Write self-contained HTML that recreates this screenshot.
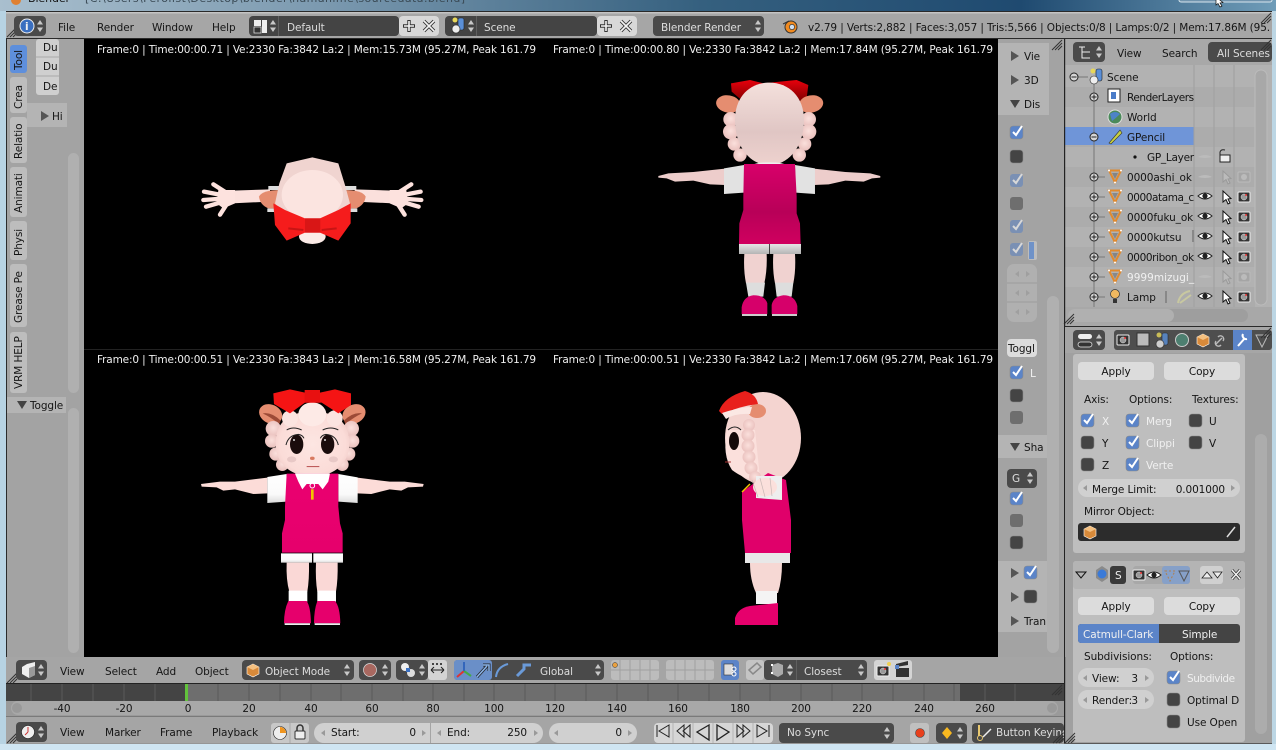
<!DOCTYPE html>
<html><head><meta charset="utf-8"><title>Blender</title>
<style>
html,body{margin:0;padding:0;width:1276px;height:750px;overflow:hidden;background:#cfe5f2}
svg{display:block}
text{font-family:"DejaVu Sans","Liberation Sans",sans-serif;font-size:10.5px;letter-spacing:-.1px;fill:#151515;white-space:pre}
.w{fill:#f0f0f0}.g{fill:#ddd}.m{fill:#666}
</style></head><body>
<svg width="1276" height="750" viewBox="0 0 1276 750" xmlns="http://www.w3.org/2000/svg">
<defs>
<linearGradient id="sky" x1="0" x2="1" y1="0" y2="0"><stop offset="0" stop-color="#a9bfce"/><stop offset=".25" stop-color="#7c9ab0"/><stop offset=".55" stop-color="#35607f"/><stop offset=".8" stop-color="#1f4a70"/><stop offset="1" stop-color="#6f9cb8"/></linearGradient>
<radialGradient id="skin" cx=".5" cy=".5" r=".6"><stop offset="0" stop-color="#fde6e2"/><stop offset=".75" stop-color="#fbdcd8"/><stop offset="1" stop-color="#eec8c4"/></radialGradient>
<radialGradient id="curl" cx=".5" cy=".45" r=".6"><stop offset="0" stop-color="#fbe0dc"/><stop offset="1" stop-color="#e8bebb"/></radialGradient>
<linearGradient id="skinb" x1="0" x2="0" y1="0" y2="1"><stop offset="0" stop-color="#f4e0dc"/><stop offset=".6" stop-color="#e0c6c4"/><stop offset="1" stop-color="#eed2ce"/></linearGradient>
<linearGradient id="pink" x1="0" x2="0" y1="0" y2="1"><stop offset="0" stop-color="#ea0070"/><stop offset="1" stop-color="#e6006c"/></linearGradient>
<linearGradient id="pinkb" x1="0" x2="0" y1="0" y2="1"><stop offset="0" stop-color="#d8006a"/><stop offset=".6" stop-color="#b80058"/><stop offset="1" stop-color="#d0005f"/></linearGradient>
<linearGradient id="wht" x1="0" x2="0" y1="0" y2="1"><stop offset="0" stop-color="#fff"/><stop offset=".7" stop-color="#fafafa"/><stop offset="1" stop-color="#dcdcdc"/></linearGradient>
<linearGradient id="wb" x1="0" x2="0" y1="0" y2="1"><stop offset="0" stop-color="#e6e6e6"/><stop offset="1" stop-color="#b5b5b5"/></linearGradient>
<linearGradient id="bowb" x1="0" x2="0" y1="0" y2="1"><stop offset="0" stop-color="#e8000c"/><stop offset="1" stop-color="#7c0000"/></linearGradient>
<g id="ud"><path d="M-3-1.500L0-6 3-1.500ZM-3 1.500L0 6 3 1.500Z" fill="#c8c8c8"/></g>
<g id="c1"><rect width="13" height="13" rx="3" fill="#5b84c8" stroke="#8a8a8a" stroke-width=".6"/><path d="M3 6l3 3 6-9" stroke="#fff" stroke-width="2" fill="none"/></g>
<g id="c1d"><rect width="13" height="13" rx="3" fill="#7a90b4"/><path d="M3 6l3 3 6-9" stroke="#d8d8d8" stroke-width="2" fill="none"/></g>
<g id="c0"><rect width="13" height="13" rx="3" fill="#444" stroke="#8a8a8a" stroke-width=".6"/></g>
<g id="c0d"><rect width="13" height="13" rx="3" fill="#6e6e6e"/></g>
<g id="eye"><path d="M-7 0Q0-6 7 0Q0 6-7 0Z" fill="#fff" stroke="#222"/><circle r="2.600" fill="#222"/></g>
<g id="eyeo"><path d="M-7 0Q0-4 7 0Q0 2-7 0Z" fill="#bbb"/></g>
<g id="cur"><path d="M-3-6V5L0 2.500 2 7 4 6 2 2 5 1.500Z" fill="#fff" stroke="#111"/></g>
<g id="curo"><path d="M-3-6V5L0 2.500 2 7 4 6 2 2 5 1.500Z" fill="#bbb" stroke="#999"/></g>
<g id="cam"><rect x="-6" y="-5" width="12" height="10" rx="1" fill="#333" stroke="#eee"/><circle r="3" fill="#999" stroke="#ddd" stroke-width=".5"/><circle cx="2" cy="-2" r="1" fill="#e33"/></g>
<g id="camo"><rect x="-6" y="-5" width="12" height="10" rx="1" fill="#a5a5a5" stroke="#bbb"/><circle r="3" fill="#bbb"/></g>
<g id="tri"><path d="M-6-5.500H6L0 6.500Z" fill="none" stroke="#e08a2e" stroke-width="2"/><path d="M-3-3H3L0 3Z" fill="#555" opacity=".45"/><circle cx="-6" cy="-5.500" r="1" fill="#fff"/><circle cx="6" cy="-5.500" r="1" fill="#fff"/><circle cy="6.500" r="1" fill="#fff"/></g>
<g id="plus"><circle r="4" fill="#d5d5d5" stroke="#222"/><path d="M-2.500 0H2.500M0-2.500V2.500" stroke="#222"/></g>
<g id="minus"><circle r="4" fill="#d5d5d5" stroke="#222"/><path d="M-2.500 0H2.500" stroke="#222"/></g>
<g id="scn"><circle cx="-4" cy="-6" r="2.500" fill="#e8d85a"/><rect x="-1" y="-8" width="6" height="12" rx="2" fill="#5a8fd8" stroke="#222" stroke-width=".6"/><circle cx="-3" cy="3" r="4" fill="#eee" stroke="#222" stroke-width=".6"/></g>
<g id="box"><path d="M0-6L6-3V4L0 7-6 4V-3Z" fill="#d88a3a" stroke="#fff" stroke-width=".6"/><path d="M-6-3L0 0 6-3 0-6Z" fill="#f4c080"/></g>
<g id="hatch"><path d="M0 10L10 0M3 10L10 3M6 10L10 6" stroke="#333" stroke-width="1"/></g>
<g id="la"><path d="M2-3V3L-2 0Z" fill="#999"/></g>
<g id="ra"><path d="M-2-3V3L2 0Z" fill="#999"/></g>
<g id="rt"><path d="M-4-5V5L4 0Z" fill="#555"/></g>
<g id="dt"><path d="M-5-4H5L0 4Z" fill="#444"/></g>
</defs>

<!-- desktop / frame -->
<rect width="1276" height="750" fill="#cfe5f2"/>
<rect width="1276" height="11" fill="url(#sky)"/>
<circle cx="16" cy="0" r="5" fill="#e08030"/>
<text x="28" y="2" style="font-size:11px">Blender</text>
<text x="85" y="2" style="font-size:11px;fill:#3a4a55" textLength="380">[C:\Users\Ferolist\Desktop\blender\hamahime\sourcedata.blend]</text>
<rect x="1179" y="-3" width="93" height="5" rx="2" fill="#6f93ad" stroke="#d8e6ee"/>
<path d="M1216-3V5L1218 3.500 1220 7 1222 6 1220 3 1223 2.500Z" fill="#fff" stroke="#111" stroke-width=".7"/>
<rect x="0" y="11" width="6" height="733" fill="#b7d3e3"/>
<rect x="1272" y="11" width="4" height="733" fill="#bcd6e4"/>
<rect x="6" y="11" width="1266" height="733" fill="#2a2a2a"/>

<!-- top bar -->
<rect x="6" y="12" width="1266" height="26" fill="#a6a6a6"/>
<rect x="6" y="12" width="1266" height="1.500" fill="#c4c4c4"/>
<use href="#hatch" x="7" y="27"/>
<rect x="14" y="16" width="32" height="20" rx="4" fill="#4a4a4a"/>
<circle cx="27" cy="26" r="7" fill="#3a6fc0" stroke="#eee"/><text x="25" y="30" class="w" style="font-weight:bold">i</text>
<use href="#ud" x="40" y="26"/>
<text x="58" y="31">File</text><text x="97" y="31">Render</text><text x="152" y="31">Window</text><text x="212" y="31">Help</text>
<rect x="249" y="16" width="150" height="20" rx="4" fill="#444"/>
<rect x="254" y="20" width="7" height="6" fill="#eee"/><rect x="254" y="27" width="7" height="6" fill="#333" stroke="#eee" stroke-width=".7"/><rect x="262" y="20" width="5" height="13" fill="#eee"/>
<use href="#ud" x="273" y="26"/><rect x="278" y="16" width=".8" height="20" fill="#666"/>
<text x="287" y="31" class="g">Default</text>
<rect x="399" y="16" width="40" height="20" rx="4" fill="#d8d8d8"/>
<path d="M403 26H415M409 20V32" stroke="#333" stroke-width="3.400"/><path d="M404 26H414M409 21V31" stroke="#f4f4f4" stroke-width="1.600"/>
<path d="M424 21L434 31M434 21L424 31" stroke="#333" stroke-width="3.400"/><path d="M424 21L434 31M434 21L424 31" stroke="#f4f4f4" stroke-width="1.600"/>
<rect x="445" y="16" width="152" height="20" rx="4" fill="#444"/>
<use href="#scn" x="459" y="26"/><use href="#ud" x="471" y="26" /><rect x="476" y="16" width=".8" height="20" fill="#666"/>
<text x="484" y="31" class="g">Scene</text>
<rect x="597" y="16" width="40" height="20" rx="4" fill="#d8d8d8"/>
<path d="M600 26H612M606 20V32" stroke="#333" stroke-width="3.400"/><path d="M601 26H611M606 21V31" stroke="#f4f4f4" stroke-width="1.600"/>
<path d="M621 21L631 31M631 21L621 31" stroke="#333" stroke-width="3.400"/><path d="M621 21L631 31M631 21L621 31" stroke="#f4f4f4" stroke-width="1.600"/>
<rect x="653" y="16" width="111" height="20" rx="4" fill="#4a4a4a"/>
<text x="661" y="31" class="g">Blender Render</text><use href="#ud" x="758" y="26"/>
<circle cx="791" cy="27" r="6" fill="#f08a20" stroke="#333"/><circle cx="792" cy="27" r="2.600" fill="#cfe0f2" stroke="#333" stroke-width=".7"/><path d="M783 24L789 21" stroke="#333"/>
<text x="808" y="31" textLength="462">v2.79 | Verts:2,882 | Faces:3,057 | Tris:5,566 | Objects:0/8 | Lamps:0/2 | Mem:17.86M (95.</text>
<use href="#hatch" x="1261" y="13"/>

<!-- left toolbar -->
<rect x="7" y="39" width="77" height="618" fill="#a3a3a3"/>
<rect x="36" y="39" width="23" height="56" rx="3" fill="#cfcfcf"/>
<path d="M36 57H59M36 76H59" stroke="#aaa"/>
<text x="43" y="51">Du</text><text x="43" y="70">Du</text><text x="43" y="90">De</text>
<rect x="27" y="103" width="40" height="24" fill="#b4b4b4"/>
<use href="#rt" x="45" y="116"/><text x="52" y="120">Hi</text>
<g>
<rect x="10" y="45" width="17" height="28" rx="3" fill="#5e8fdc"/>
<rect x="10" y="77" width="17" height="36" rx="3" fill="#bdbdbd"/>
<rect x="10" y="117" width="17" height="46" rx="3" fill="#bdbdbd"/>
<rect x="10" y="167" width="17" height="50" rx="3" fill="#bdbdbd"/>
<rect x="10" y="221" width="17" height="39" rx="3" fill="#bdbdbd"/>
<rect x="10" y="264" width="17" height="63" rx="3" fill="#bdbdbd"/>
<rect x="10" y="332" width="17" height="61" rx="3" fill="#bdbdbd"/>
<text transform="translate(22 70) rotate(-90)">Tool</text>
<text transform="translate(22 109) rotate(-90)">Crea</text>
<text transform="translate(22 159) rotate(-90)">Relatio</text>
<text transform="translate(22 213) rotate(-90)">Animati</text>
<text transform="translate(22 256) rotate(-90)">Physi</text>
<text transform="translate(22 323) rotate(-90)">Grease Pe</text>
<text transform="translate(22 389) rotate(-90)">VRM HELP</text>
</g>
<rect x="68" y="153" width="11" height="240" rx="5.500" fill="#b0b0b0"/>
<rect x="7" y="397" width="59" height="16" fill="#b4b4b4"/>
<use href="#dt" x="22" y="405"/><text x="30" y="409">Toggle</text>
<rect x="68" y="408" width="11" height="245" rx="5.500" fill="#b0b0b0"/>

<!-- 3D viewport -->
<rect x="84" y="39" width="914" height="618" fill="#000"/>
<rect x="84" y="349" width="914" height="1" fill="#222"/>
<text x="97" y="53" class="w" textLength="439">Frame:0 | Time:00:00.71 | Ve:2330 Fa:3842 La:2 | Mem:15.73M (95.27M, Peak 161.79</text>
<text x="553" y="53" class="w" textLength="440">Frame:0 | Time:00:00.80 | Ve:2330 Fa:3842 La:2 | Mem:17.84M (95.27M, Peak 161.79</text>
<text x="97" y="363" class="w" textLength="439">Frame:0 | Time:00:00.51 | Ve:2330 Fa:3843 La:2 | Mem:16.58M (95.27M, Peak 161.79</text>
<text x="553" y="363" class="w" textLength="440">Frame:0 | Time:00:00.51 | Ve:2330 Fa:3842 La:2 | Mem:17.06M (95.27M, Peak 161.79</text>

<!-- top view -->
<g transform="translate(190 140) scale(.3333)">
<path d="M235 138H275V150H235ZM459 138H499V150H459ZM232 205H255V216H232ZM479 205H502V216H479Z" fill="#ddd"/>
<path d="M125 152L240 148V185L125 190Z" fill="#fbe0dc"/><path d="M609 152L494 148V185L609 190Z" fill="#fbe0dc"/>
<g stroke="#fde2de" stroke-width="13" stroke-linecap="round" fill="none">
<path d="M110 168L42 155M110 175L40 180M110 182L48 200M112 190L90 224M112 160L70 133"/>
<path d="M624 168L692 155M624 175L694 180M624 182L686 200M622 190L644 224M622 160L664 133"/>
</g>
<path d="M85 150L135 150V190L100 205 80 190Z" fill="#fde2de"/><path d="M649 150L599 150V190L634 205 654 190Z" fill="#fde2de"/>
<path d="M207 170Q215 150 275 150V205H235Q210 195 207 170Z" fill="#e58d70"/>
<path d="M527 170Q519 150 459 150V205H499Q524 195 527 170Z" fill="#e58d70"/>
<ellipse cx="367" cy="290" rx="40" ry="22" fill="#fbeae6"/>
<path d="M290 70L367 52 445 70 465 135 480 190 450 225H285L255 190 268 130Z" fill="#f0d4d0"/>
<ellipse cx="367" cy="165" rx="92" ry="75" fill="#fbe4e0"/>
<path d="M250 190L285 210 345 235H390L445 210 482 190V250L445 302 390 278H345L290 302 255 255Z" fill="#f51c1c"/>
<rect x="345" y="235" width="46" height="43" fill="#d91616"/>
<path d="M295 265L340 270M395 270L440 265" stroke="#c81414" stroke-width="6"/>
</g>

<!-- back view -->
<g transform="translate(650 70) scale(.3333)">
<path d="M243 40L300 30 340 40 390 35 440 30 475 45 470 85 440 95H280L245 65Z" fill="url(#bowb)"/>
<ellipse cx="235" cy="102" rx="37" ry="26" transform="rotate(10 235 102)" fill="#e58d70"/>
<ellipse cx="483" cy="102" rx="37" ry="26" transform="rotate(-10 483 102)" fill="#e58d70"/>
<g fill="url(#curl)"><circle cx="242" cy="148" r="22"/><circle cx="242" cy="185" r="23"/><circle cx="253" cy="222" r="20"/><circle cx="270" cy="255" r="20"/><circle cx="476" cy="148" r="22"/><circle cx="476" cy="185" r="23"/><circle cx="464" cy="222" r="20"/><circle cx="448" cy="255" r="20"/></g>
<path d="M255 150C255 80 300 38 358 38C416 38 462 80 462 150C462 225 420 285 358 285C296 285 255 225 255 150Z" fill="url(#skinb)"/>
<ellipse cx="358" cy="286" rx="50" ry="9" fill="#eee"/>
<path d="M25 318L55 310 130 306 225 296V345L180 343 130 332 75 335 50 325 25 323Z" fill="#edcdcb"/>
<path d="M691 318L661 310 586 306 491 296V345L536 343 586 332 641 335 666 325 691 323Z" fill="#edcdcb"/>
<path d="M222 295L282 285V368L222 372Z" fill="#e2e2e2"/><path d="M435 285L495 295V372L437 368Z" fill="#e2e2e2"/>
<path d="M282 282H435L440 380V430L450 460 452 522H267L268 460 280 420V380Z" fill="url(#pinkb)"/>
<path d="M267 522H358V552H267ZM360 522H453V552H360Z" fill="url(#wb)"/>
<path d="M283 552H350Q352 600 343 640H288Q280 600 283 552ZM370 552H435Q438 600 430 640H375Q367 600 370 552Z" fill="#f0d2d0"/>
<path d="M288 638H345L340 680H295ZM375 638H430L425 680H380Z" fill="#ddd"/>
<path d="M275 732V712Q280 680 310 676 345 676 352 700V732ZM365 732V705Q370 680 400 676 435 676 442 708V732Z" fill="#d6006a"/>
<path d="M276 732H351V738H276ZM366 732H441V738H366Z" fill="#ccc"/>
</g>

<!-- front view -->
<g transform="translate(190 380) scale(.3333)">
<ellipse cx="242" cy="102" rx="36" ry="28" transform="rotate(25 242 102)" fill="#e58d70"/>
<ellipse cx="492" cy="102" rx="36" ry="28" transform="rotate(-25 492 102)" fill="#e58d70"/>
<path d="M218 100Q245 95 272 122L268 132Q240 110 218 100ZM516 100Q489 95 462 122L466 132Q494 110 516 100Z" fill="#9c4a36"/>
<g fill="url(#curl)"><circle cx="250" cy="146" r="23"/><circle cx="245" cy="183" r="20"/><circle cx="258" cy="222" r="20"/><circle cx="277" cy="254" r="19"/><circle cx="484" cy="146" r="23"/><circle cx="488" cy="183" r="20"/><circle cx="476" cy="222" r="20"/><circle cx="457" cy="254" r="19"/></g>
<path d="M257 190C257 110 320 95 367 95C414 95 478 110 478 190C478 260 420 290 367 290C314 290 257 260 257 190Z" fill="url(#skin)"/>
<ellipse cx="300" cy="115" rx="24" ry="24" fill="#fbe4e0"/><ellipse cx="434" cy="115" rx="24" ry="24" fill="#fbe4e0"/>
<ellipse cx="367" cy="103" rx="42" ry="36" fill="#fdeae6"/>
<path d="M250 40L300 28 345 38H390L435 28 483 40V75L445 100 395 68H345L300 100 252 72Z" fill="#f51414"/>
<rect x="344" y="30" width="46" height="38" fill="#e81010"/>
<ellipse cx="320" cy="193" rx="20" ry="29" fill="#1a0c0c"/><ellipse cx="413" cy="193" rx="20" ry="29" fill="#1a0c0c"/>
<circle cx="312" cy="180" r="3" fill="#ddd"/><circle cx="405" cy="180" r="3" fill="#ddd"/>
<path d="M288 195Q295 165 325 163 338 165 342 175M445 195Q438 165 408 163 395 165 391 175M290 150Q310 138 335 150M398 150Q423 138 445 150" fill="none" stroke="#222" stroke-width="3"/>
<ellipse cx="305" cy="238" rx="14" ry="9" fill="#e8c8c6"/><ellipse cx="430" cy="238" rx="14" ry="9" fill="#e8c8c6"/>
<ellipse cx="367" cy="235" rx="7" ry="5" fill="#d87a60"/>
<path d="M350 260H388" stroke="#a33" stroke-width="2.500"/>
<path d="M33 312L90 305 135 305 232 293V340L190 342 135 328 100 332 80 322 35 320Z" fill="#fcdcd8"/>
<path d="M701 312L644 305 599 305 502 293V340L544 342 599 328 634 332 654 322 699 320Z" fill="#fcdcd8"/>
<path d="M232 291L290 282V365L232 369Z" fill="url(#wht)"/><path d="M445 282L503 292V369L445 365Z" fill="url(#wht)"/>
<path d="M290 281H445V380L450 430 458 460V518H276V460L285 420V380Z" fill="url(#pink)"/>
<path d="M315 281H420L415 305 398 328 385 312H350L337 328 325 305Z" fill="#fff"/>
<circle cx="367" cy="317" r="7" fill="#e8006e" stroke="#fff" stroke-width="3"/>
<rect x="363" y="328" width="8" height="31" fill="#f2c400"/>
<path d="M273 520H366V548H273ZM370 520H459V548H370Z" fill="url(#wht)"/>
<path d="M290 548H357Q358 600 352 635H298Q288 600 290 548ZM378 548H443Q444 600 438 635H382Q376 600 378 548Z" fill="#fad8d6"/>
<path d="M296 632H352V665H296ZM382 632H438V665H382Z" fill="#fff"/>
<path d="M295 663H350Q362 680 363 730H282Q282 690 295 663ZM382 663H435Q450 680 451 730H372Q372 690 382 663Z" fill="#e6006c"/>
<path d="M284 730H360V735H284ZM374 730H450V735H374Z" fill="#eee"/>
</g>

<!-- side view -->
<g>
<ellipse cx="763" cy="438" rx="38" ry="46" fill="#f4d4d0"/>
<path d="M727 430Q722 455 732 470 748 482 760 478L755 430Z" fill="#fbe0dc"/>
<ellipse cx="734" cy="441" rx="5" ry="9" fill="#150a0a"/>
<path d="M728 430Q735 424 741 430" stroke="#222" fill="none"/>
<path d="M725 462H731" stroke="#a33"/>
<g fill="url(#curl)"><circle cx="749" cy="425" r="6"/><circle cx="748" cy="435" r="6.500"/><circle cx="748" cy="446" r="6.500"/><circle cx="749" cy="457" r="6.500"/><circle cx="751" cy="468" r="6.500"/><circle cx="755" cy="477" r="6"/></g>
<ellipse cx="757" cy="411" rx="9" ry="7" fill="#e58d70"/>
<path d="M719 411Q724 397 745 391 756 394 758 404 740 406 722 414Z" fill="#e8201c"/>
<path d="M722 413Q740 407 752 407L750 414Q735 413 726 419Z" fill="#fbe8e4"/>
<path d="M742 492L768 473 786 480 791 520V553H745L742 520Z" fill="#e0006a"/>
<path d="M756 476L782 476 782 500 756 498Z" fill="#eee"/>
<path d="M745 553H790V563H745Z" fill="#e8e8e8"/>
<path d="M750 563H782Q782 580 778 593H756Q750 580 750 563Z" fill="#f6d8d4"/>
<path d="M756 591H777V604H756Z" fill="#f4f4f4"/>
<path d="M735 625V618Q738 608 750 606L778 603V625Z" fill="#e6006c"/>
<ellipse cx="765" cy="487" rx="12" ry="9" fill="#fbe0dc"/>
<path d="M752 480L758 497M760 478L765 497M770 478L772 496" stroke="#c8b8b6" stroke-width=".7"/>
<path d="M742 492L750 484" stroke="#f2c400" stroke-width="1.500"/>
</g>

<!-- N panel -->
<rect x="998" y="39" width="66" height="618" fill="#a3a3a3"/>
<use href="#hatch" x="1052" y="40"/>
<rect x="998" y="43" width="51" height="72" fill="#b4b4b4"/>
<use href="#rt" x="1015" y="56"/><text x="1024" y="60">Vie</text>
<use href="#rt" x="1015" y="80"/><text x="1024" y="84">3D</text>
<use href="#dt" x="1015" y="104"/><text x="1024" y="108">Dis</text>
<use href="#c1" x="1010" y="126"/><use href="#c0" x="1010" y="150"/><use href="#c1d" x="1010" y="174"/><use href="#c0d" x="1010" y="197"/><use href="#c1d" x="1010" y="220"/><use href="#c1d" x="1010" y="243"/>
<rect x="1028" y="241" width="9" height="19" rx="2" fill="#bdbdbd"/><rect x="1029" y="242" width="5" height="17" fill="#6f92c8"/>
<rect x="1007" y="264" width="30" height="58" rx="7" fill="#b0b0b0"/>
<path d="M1007 283H1037M1007 302H1037" stroke="#9c9c9c"/>
<use href="#la" x="1017" y="274" opacity=".7"/><use href="#ra" x="1028" y="274" opacity=".7"/><use href="#la" x="1017" y="293" opacity=".7"/><use href="#ra" x="1028" y="293" opacity=".7"/><use href="#la" x="1017" y="312" opacity=".7"/><use href="#ra" x="1028" y="312" opacity=".7"/>
<rect x="1007" y="339" width="30" height="18" rx="4" fill="#dcdcdc"/><text x="1008" y="352">Toggl</text>
<use href="#c1" x="1010" y="366"/><text x="1030" y="377" class="w">L</text>
<use href="#c0" x="1010" y="389"/><use href="#c0d" x="1010" y="411"/>
<rect x="998" y="435" width="51" height="23" fill="#b4b4b4"/>
<use href="#dt" x="1015" y="447"/><text x="1024" y="451">Sha</text>
<rect x="1007" y="469" width="30" height="19" rx="4" fill="#4a4a4a"/><text x="1012" y="482" class="g">G</text><use href="#ud" x="1030" y="478"/>
<use href="#c1" x="1010" y="492"/><use href="#c0d" x="1010" y="514"/><use href="#c0" x="1010" y="536"/>
<rect x="998" y="561" width="51" height="71" fill="#b4b4b4"/>
<use href="#rt" x="1015" y="573"/><use href="#c1" x="1024" y="566"/>
<use href="#rt" x="1015" y="597"/><use href="#c0" x="1024" y="590"/>
<use href="#rt" x="1015" y="621"/><text x="1024" y="625">Tran</text>
<rect x="1047" y="296" width="12" height="357" rx="6" fill="#b0b0b0"/>

<!-- outliner -->
<rect x="1065" y="39" width="207" height="287" fill="#a8a8a8"/>
<rect x="1073" y="42" width="32" height="20" rx="4" fill="#4a4a4a"/>
<path d="M1079 47H1085M1082 47V58H1090M1082 52H1090" stroke="#eee" fill="none"/><use href="#ud" x="1099" y="52"/>
<text x="1117" y="57">View</text><text x="1162" y="57">Search</text>
<rect x="1208" y="42" width="64" height="20" rx="4" fill="#4a4a4a"/><text x="1217" y="57" class="g">All Scenes</text>
<use href="#hatch" x="1261" y="40"/>
<rect x="1065" y="65" width="207" height="260" fill="#b2b2b2"/>
<g fill="#acacac"><rect x="1065" y="87" width="190" height="20"/><rect x="1065" y="127" width="190" height="20"/><rect x="1065" y="167" width="190" height="20"/><rect x="1065" y="207" width="190" height="20"/><rect x="1065" y="247" width="190" height="20"/><rect x="1065" y="287" width="190" height="20"/></g>
<rect x="1065" y="127" width="129" height="18" fill="#6f95d8"/>
<path d="M1194 65V307M1214 65V307M1234 65V307" stroke="#9f9f9f"/>
<path d="M1078 77H1088M1094 82V308M1098 177H1105M1098 197H1105M1098 217H1105M1098 237H1105M1098 257H1105M1098 277H1105M1098 297H1105" stroke="#777"/>
<use href="#minus" x="1074" y="77"/><use href="#scn" x="1097" y="77"/><text x="1107" y="81">Scene</text>
<use href="#plus" x="1094" y="97"/><rect x="1108" y="89" width="12" height="13" fill="#fff" stroke="#222"/><rect x="1111" y="92" width="5" height="7" fill="#4a7cc8"/><text x="1127" y="101" textLength="67">RenderLayers</text>
<circle cx="1115" cy="117" r="7" fill="#4b8a5a" stroke="#ddd"/><path d="M1110 114Q1115 110 1120 114Q1116 118 1112 121Z" fill="#4d83c8"/><text x="1127" y="121">World</text>
<use href="#minus" x="1094" y="137"/><path d="M1109 143L1120 130 1122 133 1111 144Z" fill="#c8d040" stroke="#333" stroke-width=".6"/><text x="1127" y="141">GPencil</text>
<circle cx="1135" cy="157" r="1.600" fill="#111"/><text x="1147" y="161" textLength="47">GP_Layer</text>
<use href="#eyeo" x="1205" y="157"/><rect x="1220" y="155" width="10" height="7" fill="#eee" stroke="#222"/><path d="M1220 155V152Q1221 149 1225 150" fill="none" stroke="#222"/>
<use href="#plus" x="1094" y="177"/><use href="#tri" x="1115" y="176"/><text x="1127" y="181">0000ashi_ok</text><use href="#eyeo" x="1205" y="177"/><use href="#curo" x="1226" y="177"/><use href="#camo" x="1244" y="177"/>
<use href="#plus" x="1094" y="197"/><use href="#tri" x="1115" y="196"/><text x="1127" y="201" textLength="67">0000atama_c</text><use href="#eye" x="1205" y="196"/><use href="#cur" x="1226" y="197"/><use href="#cam" x="1244" y="197"/>
<use href="#plus" x="1094" y="217"/><use href="#tri" x="1115" y="216"/><text x="1127" y="221">0000fuku_ok</text><use href="#eye" x="1205" y="216"/><use href="#cur" x="1226" y="217"/><use href="#cam" x="1244" y="217"/>
<use href="#plus" x="1094" y="237"/><use href="#tri" x="1115" y="236"/><text x="1127" y="241">0000kutsu</text><rect x="1192" y="230" width="2" height="12" fill="#888"/><use href="#eye" x="1205" y="236"/><use href="#cur" x="1226" y="237"/><use href="#cam" x="1244" y="237"/>
<use href="#plus" x="1094" y="257"/><use href="#tri" x="1115" y="256"/><text x="1127" y="261" textLength="67">0000ribon_ok</text><use href="#eye" x="1205" y="256"/><use href="#cur" x="1226" y="257"/><use href="#cam" x="1244" y="257"/>
<use href="#plus" x="1094" y="277"/><use href="#tri" x="1115" y="276"/><text x="1127" y="281" class="w" textLength="67">9999mizugi_</text><use href="#eyeo" x="1205" y="277"/><use href="#curo" x="1226" y="277"/><use href="#camo" x="1244" y="277"/>
<use href="#plus" x="1094" y="297"/><circle cx="1115" cy="294" r="4.500" fill="#f0b860" stroke="#333" stroke-width=".7"/><rect x="1113" y="299" width="4" height="4" fill="#333"/><text x="1127" y="301">Lamp</text><rect x="1165" y="291" width="2" height="12" fill="#888"/>
<path d="M1178 303Q1180 293 1190 291M1180 303L1191 295" fill="none" stroke="#c8c8a0" stroke-width="2"/><use href="#eye" x="1205" y="296"/><use href="#cur" x="1226" y="297"/><use href="#cam" x="1244" y="297"/>
<rect x="1255" y="70" width="12" height="235" rx="6" fill="#a8a8a8" stroke="#bbb"/>
<rect x="1065" y="307" width="207" height="19" fill="#a8a8a8"/>
<rect x="1068" y="309" width="180" height="13" rx="6.500" fill="#9e9e9e"/><rect x="1068" y="309" width="106" height="13" rx="6.500" fill="#b0b0b0"/>
<use href="#hatch" x="1064" y="314"/>
<rect x="1064" y="39" width="1.200" height="705" fill="#222"/>

<!-- properties -->
<rect x="1065" y="327" width="207" height="416" fill="#a0a0a0"/>
<rect x="1065" y="327" width="207" height="26" fill="#a6a6a6"/>
<rect x="1073" y="330" width="32" height="20" rx="4" fill="#4a4a4a"/>
<rect x="1078" y="334" width="14" height="5" rx="2.500" fill="#eee"/><rect x="1078" y="342" width="14" height="5" rx="2.500" fill="#333" stroke="#eee" stroke-width=".7"/><use href="#ud" x="1099" y="340"/>
<rect x="1114" y="330" width="158" height="20" rx="3" fill="#4e4e4e"/>
<rect x="1233" y="330" width="19" height="20" fill="#5b84c8"/>
<use href="#cam" x="1123" y="340"/><rect x="1137" y="333" width="12" height="13" fill="#bbb" stroke="#333"/><use href="#scn" x="1163" y="341" opacity=".8"/><circle cx="1182" cy="340" r="6.500" fill="#4d7f70" stroke="#ccc"/><use href="#box" x="1203" y="340"/>
<path d="M1216 344L1222 338M1218 337A3 3 0 0 1 1223 341M1221 345A3 3 0 0 1 1216 341" stroke="#bbb" fill="none" stroke-width="1.400"/>
<path d="M1238 346L1245 338M1243 334A3.500 3.500 0 0 0 1247 339" stroke="#fff" fill="none" stroke-width="2"/>
<path d="M1256 335H1268L1262 347Z" fill="none" stroke="#bbb"/>
<use href="#hatch" x="1261" y="328"/>
<!-- mirror panel -->
<rect x="1073" y="354" width="172" height="199" rx="3" fill="#bebebe"/>
<rect x="1078" y="362" width="76" height="18" rx="4" fill="#dcdcdc"/><rect x="1164" y="362" width="76" height="18" rx="4" fill="#dcdcdc"/>
<text x="1116" y="375" text-anchor="middle">Apply</text><text x="1202" y="375" text-anchor="middle">Copy</text>
<text x="1084" y="403" fill="#333">Axis:</text><text x="1129" y="403">Options:</text><text x="1192" y="403">Textures:</text>
<use href="#c1" x="1081" y="414"/><use href="#c0" x="1081" y="436"/><use href="#c0" x="1081" y="458"/>
<text x="1102" y="425" class="w">X</text><text x="1102" y="447">Y</text><text x="1102" y="469">Z</text>
<use href="#c1" x="1126" y="414"/><use href="#c1" x="1126" y="436"/><use href="#c1" x="1126" y="458"/>
<text x="1146" y="425" class="w">Merg</text><text x="1146" y="447" class="w">Clippi</text><text x="1146" y="469" class="w">Verte</text>
<use href="#c0" x="1189" y="414"/><use href="#c0" x="1189" y="436"/>
<text x="1209" y="425">U</text><text x="1209" y="447">V</text>
<rect x="1078" y="479" width="162" height="18" rx="9" fill="#d0d0d0"/><use href="#la" x="1085" y="488"/><use href="#ra" x="1233" y="488"/>
<text x="1092" y="493">Merge Limit:</text><text x="1225" y="493" text-anchor="end">0.001000</text>
<text x="1084" y="515">Mirror Object:</text>
<rect x="1078" y="523" width="162" height="18" rx="3" fill="#2c2c2c"/>
<use href="#box" x="1090" y="532"/><path d="M1227 537L1235 527" stroke="#ddd" stroke-width="1.500"/>
<!-- subsurf -->
<rect x="1073" y="561" width="172" height="181" rx="3" fill="#bebebe"/>
<rect x="1073" y="561" width="172" height="28" rx="3" fill="#b4b4b4"/>
<path d="M1076 572H1086L1081 578Z" fill="none" stroke="#111"/>
<path d="M1102 566L1108 570V578L1102 582 1096 578V570Z" fill="#8a8a8a"/><circle cx="1102" cy="574" r="4.500" fill="#3a7ad8"/>
<rect x="1110" y="566" width="16" height="18" rx="3" fill="#3a3a3a"/><text x="1115" y="579" class="w">S</text>
<rect x="1133" y="566" width="57" height="18" rx="3" fill="#a8a8a8"/><rect x="1162" y="566" width="28" height="18" rx="3" fill="#86a0c8"/>
<use href="#cam" x="1139" y="575"/><use href="#eye" x="1154" y="575"/>
<path d="M1165 571H1175L1170 581Z" fill="none" stroke="#b08050" stroke-dasharray="2"/><path d="M1179 571H1189L1184 581Z" fill="none" stroke="#555"/>
<rect x="1200" y="566" width="23" height="18" rx="3" fill="#d0d0d0"/>
<path d="M1202 578L1207 572 1212 578ZM1213 572H1222L1217.500 578Z" fill="#eee" stroke="#222" stroke-width=".8"/>
<path d="M1232 570L1240 579M1240 570L1232 579" stroke="#333" stroke-width="3"/><path d="M1232 570L1240 579M1240 570L1232 579" stroke="#f4f4f4" stroke-width="1.400"/>
<rect x="1078" y="597" width="76" height="18" rx="4" fill="#dcdcdc"/><rect x="1164" y="597" width="76" height="18" rx="4" fill="#dcdcdc"/>
<text x="1116" y="610" text-anchor="middle">Apply</text><text x="1202" y="610" text-anchor="middle">Copy</text>
<rect x="1078" y="624" width="162" height="19" rx="3" fill="#444"/>
<path d="M1159 624H1081A3 3 0 0 0 1078 627V640A3 3 0 0 0 1081 643H1159Z" fill="#5b84c8"/>
<text x="1083" y="638" class="w">Catmull-Clark</text><text x="1182" y="638" class="w">Simple</text>
<text x="1084" y="660">Subdivisions:</text><text x="1170" y="660">Options:</text>
<rect x="1078" y="668" width="76" height="19" rx="9.500" fill="#d0d0d0"/><rect x="1078" y="690" width="76" height="19" rx="9.500" fill="#d0d0d0"/>
<use href="#la" x="1085" y="678"/><use href="#ra" x="1147" y="678"/><use href="#la" x="1085" y="700"/><use href="#ra" x="1147" y="700"/>
<text x="1092" y="682">View:</text><text x="1138" y="682" text-anchor="end">3</text>
<text x="1092" y="704">Render:</text><text x="1138" y="704" text-anchor="end">3</text>
<use href="#c1" x="1167" y="671"/><use href="#c0" x="1167" y="693"/><use href="#c0" x="1167" y="715"/>
<text x="1187" y="682" class="w" textLength="48">Subdivide</text><text x="1187" y="704">Optimal D</text><text x="1187" y="726">Use Open</text>
<rect x="1255" y="434" width="12" height="300" rx="6" fill="#acacac"/>
<use href="#hatch" x="1065" y="733"/>

<!-- 3D header -->
<rect x="6" y="657" width="1058" height="26" fill="#a5a5a5"/>
<rect x="6" y="683" width="1058" height="1.500" fill="#222"/>
<use href="#hatch" x="7" y="673"/>
<rect x="16" y="660" width="31" height="20" rx="4" fill="#4a4a4a"/>
<path d="M35 662L27 664 22 667V674L29 678 35 675Z" fill="#eee"/><path d="M29 668V678L35 675V666Z" fill="#999"/><use href="#ud" x="41" y="670"/>
<text x="60" y="675">View</text><text x="105" y="675">Select</text><text x="156" y="675">Add</text><text x="195" y="675">Object</text>
<rect x="242" y="660" width="112" height="20" rx="4" fill="#4a4a4a"/><use href="#box" x="253" y="670"/>
<text x="265" y="675" class="g">Object Mode</text><use href="#ud" x="347" y="670"/>
<rect x="359" y="660" width="32" height="20" rx="4" fill="#4a4a4a"/><circle cx="370" cy="670" r="6.500" fill="#a86860" stroke="#ddd" stroke-width=".7"/><use href="#ud" x="385" y="670"/>
<rect x="396" y="660" width="32" height="20" rx="4" fill="#4a4a4a"/><circle cx="405" cy="667" r="4" fill="#eee"/><circle cx="411" cy="673" r="4" fill="#ddd"/><rect x="406" y="668" width="4" height="4" fill="#3a6fc0"/><use href="#ud" x="422" y="670"/>
<rect x="428" y="660" width="19" height="20" rx="3" fill="#d4d4d4"/><path d="M431 670H444M431 670L434 667M431 670L434 673M444 670L441 667M444 670L441 673" stroke="#222" fill="none"/><path d="M432 664H443" stroke="#444" stroke-width="2" stroke-dasharray="2 2"/>
<rect x="454" y="660" width="150" height="20" rx="4" fill="#4a4a4a"/>
<rect x="454" y="660" width="38" height="20" rx="3" fill="#6a8fc8"/>
<path d="M464 671L457 677" stroke="#d33" stroke-width="2"/><path d="M464 671L471 676" stroke="#4a4" stroke-width="2"/><path d="M464 671V662" stroke="#36b" stroke-width="2"/>
<path d="M477 677L487 666M483 665H489V671" stroke="#222" stroke-width="3" fill="none"/><path d="M477 677L487 666M483 665H489V671" stroke="#8ab4ea" stroke-width="1.500" fill="none"/>
<path d="M496 677Q497 667 508 664" stroke="#6a9ad8" stroke-width="2" fill="none"/>
<path d="M517 676L524 669V665H531" stroke="#6a9ad8" stroke-width="3" fill="none"/>
<text x="540" y="675" class="g">Global</text><use href="#ud" x="598" y="670"/>
<g fill="#bcbcbc"><rect x="611" y="660" width="48" height="20" rx="3"/><rect x="666" y="660" width="48" height="20" rx="3"/></g>
<path d="M620 660V680M630 660V680M640 660V680M650 660V680M611 670H659M675 660V680M685 660V680M695 660V680M705 660V680M666 670H714" stroke="#a0a0a0"/>
<circle cx="615" cy="665" r="2.500" fill="#e8a040" stroke="#333" stroke-width=".5"/>
<rect x="721" y="660" width="18" height="20" rx="3" fill="#5b84c8"/><rect x="724" y="664" width="9" height="11" fill="#ddd" stroke="#333" stroke-width=".6"/><circle cx="734" cy="669" r="2" fill="none" stroke="#fff"/><circle cx="734" cy="674" r="2" fill="none" stroke="#fff"/>
<rect x="746" y="660" width="18" height="20" rx="3" fill="#c4c4c4"/><path d="M749 670L757 663 761 667 753 674Z" fill="none" stroke="#888" stroke-width="1.500"/>
<rect x="764" y="660" width="103" height="20" rx="4" fill="#4a4a4a"/><path d="M772 665L778 663 783 665V674L778 677 772 674Z" fill="#aaa"/><rect x="771" y="664" width="2" height="2" fill="#fff"/><rect x="771" y="672" width="2" height="2" fill="#fff"/><use href="#ud" x="790" y="670"/><rect x="796" y="660" width=".8" height="20" fill="#666"/>
<text x="804" y="675" class="g">Closest</text><use href="#ud" x="861" y="670"/>
<rect x="874" y="660" width="38" height="20" rx="3" fill="#d4d4d4"/><use href="#cam" x="883" y="671"/><circle cx="889" cy="664" r="2" fill="#f0d050"/>
<rect x="896" y="668" width="13" height="9" fill="#333"/><path d="M896 664L908 661V665L896 667Z" fill="#333"/><rect x="895" y="665" width="4" height="4" fill="#5b84c8"/>

<!-- timeline -->
<rect x="6" y="684" width="1058" height="17" fill="#6e6e6e"/>
<rect x="6" y="684" width="180" height="17" fill="#444"/>
<rect x="960" y="684" width="104" height="17" fill="#444"/>
<path d="M31 684V701M62 684V701M93 684V701M124 684V701M155 684V701M218 684V701M249 684V701M280 684V701M311 684V701M341 684V701M372 684V701M403 684V701M433 684V701M464 684V701M494 684V701M525 684V701M555 684V701M586 684V701M617 684V701M648 684V701M678 684V701M709 684V701M740 684V701M770 684V701M801 684V701M832 684V701M862 684V701M893 684V701M924 684V701M954 684V701M985 684V701M1015 684V701" stroke="#5a5a5a"/>
<rect x="185" y="684" width="3" height="17" fill="#62c23c"/>
<use href="#hatch" x="1052" y="685"/>
<rect x="6" y="701" width="1058" height="15" fill="#9a9a9a"/>
<rect x="11" y="701" width="1047" height="14" rx="7" fill="#a8a8a8"/>
<circle cx="17" cy="708" r="5" fill="#999"/><circle cx="1052" cy="708" r="5" fill="#999"/>
<g style="text-anchor:middle">
<text x="62" y="712">-40</text><text x="124" y="712">-20</text><text x="188" y="712">0</text><text x="249" y="712">20</text><text x="311" y="712">40</text><text x="372" y="712">60</text><text x="433" y="712">80</text><text x="494" y="712">100</text><text x="555" y="712">120</text><text x="617" y="712">140</text><text x="678" y="712">160</text><text x="740" y="712">180</text><text x="801" y="712">200</text><text x="862" y="712">220</text><text x="924" y="712">240</text><text x="985" y="712">260</text>
</g>
<rect x="6" y="716" width="1058" height="1.500" fill="#7a7a7a"/>

<!-- bottom header -->
<rect x="6" y="717" width="1058" height="27" fill="#a5a5a5"/>
<use href="#hatch" x="7" y="733"/>
<rect x="16" y="722" width="31" height="20" rx="4" fill="#4a4a4a"/>
<circle cx="28" cy="732" r="6.500" fill="#eee" stroke="#222" stroke-width=".6"/><path d="M28 732V727M28 732L25 735" stroke="#c33"/><use href="#ud" x="41" y="732"/>
<text x="60" y="736">View</text><text x="105" y="736">Marker</text><text x="160" y="736">Frame</text><text x="212" y="736">Playback</text>
<rect x="271" y="723" width="38" height="20" rx="3" fill="#c8c8c8"/><path d="M290 723V743" stroke="#a8a8a8"/>
<circle cx="280" cy="733" r="6.500" fill="#eee" stroke="#222" stroke-width=".6"/><path d="M280 733V727A6 6 0 0 1 286 733Z" fill="#f0951f"/>
<rect x="295" y="731" width="10" height="8" rx="1" fill="#eee" stroke="#333"/><path d="M297 731V728A3 3 0 0 1 303 728V731" fill="none" stroke="#333" stroke-width="1.500"/>
<path d="M324 723H430V743H324A10 10 0 0 1 324 723Z" fill="#d0d0d0"/>
<path d="M431 723H533A10 10 0 0 1 533 743H431Z" fill="#d0d0d0"/>
<use href="#la" x="323" y="733"/><use href="#ra" x="424" y="733"/><use href="#la" x="439" y="733"/><use href="#ra" x="536" y="733"/>
<text x="331" y="736">Start:</text><text x="416" y="736" text-anchor="end">0</text>
<text x="447" y="736">End:</text><text x="527" y="736" text-anchor="end">250</text>
<rect x="549" y="723" width="88" height="20" rx="10" fill="#d0d0d0"/><use href="#la" x="556" y="733"/><use href="#ra" x="630" y="733"/><text x="622" y="736" text-anchor="end">0</text>
<rect x="654" y="723" width="119" height="20" rx="4" fill="#d6d6d6"/>
<path d="M673 723V743M693 723V743M713 723V743M733 723V743M753 723V743" stroke="#b4b4b4"/>
<g fill="none" stroke="#222">
<path d="M657 725V737M669 725L659 731 669 737Z"/>
<path d="M684 725L677 731 684 737ZM690 725L683 731 690 737Z"/>
<path d="M709 725L697 732 709 740Z" stroke-width="1.300"/>
<path d="M717 725L729 732 717 740Z" stroke-width="1.300"/>
<path d="M737 725L744 731 737 737ZM743 725L750 731 743 737Z"/>
<path d="M757 725L767 731 757 737ZM769 725V737"/>
</g>
<rect x="779" y="723" width="115" height="20" rx="4" fill="#4a4a4a"/><text x="787" y="736" class="g">No Sync</text><use href="#ud" x="887" y="733"/>
<rect x="910" y="723" width="19" height="20" rx="3" fill="#c0c0c0"/><circle cx="920" cy="733" r="4.500" fill="#e8401c" stroke="#444" stroke-width=".6"/>
<rect x="936" y="723" width="31" height="20" rx="4" fill="#4a4a4a"/><path d="M947 727L952 733 947 739 942 733Z" fill="#f8b820"/><use href="#ud" x="960" y="733"/>
<rect x="972" y="723" width="92" height="20" rx="4" fill="#4a4a4a"/>
<rect x="978" y="725" width="2" height="11" fill="#e8c870"/><circle cx="980" cy="738" r="2.500" fill="none" stroke="#e8c870"/><path d="M983 737L991 729" stroke="#eee" stroke-width="1.500"/>
<svg x="972" y="723" width="92" height="20"><text x="24" y="13" class="g">Button Keying</text></svg>
<use href="#hatch" x="1053" y="733"/>
<rect x="1064" y="657" width="1.200" height="87" fill="#222"/>
<rect x="6" y="743.500" width="1266" height="1" fill="#888"/>
<rect x="0" y="744" width="1276" height="6" fill="#cfe5f2"/>
</svg>
</body></html>
